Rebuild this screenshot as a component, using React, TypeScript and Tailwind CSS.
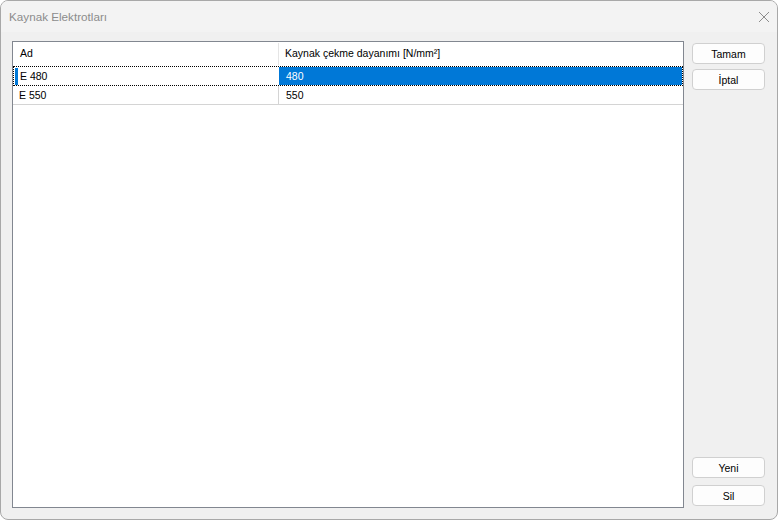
import React from "react";

const rows = [
  { name: "E 480", value: "480" },
  { name: "E 550", value: "550" },
];

function DialogButton({ label }: { label: string }) {
  return (
    <button
      type="button"
      className="h-[21px] w-[73px] rounded-[4px] border border-[#d0d0d0] bg-[#fdfdfd] pt-[1px] text-[10.5px] leading-none text-black"
    >
      {label}
    </button>
  );
}

export default function App() {
  return (
    <div
      className="flex h-[520px] w-[778px] flex-col overflow-hidden rounded-[8px] border border-[#a8a8a8] bg-[#f0f0f0] text-[10.5px] text-black"
      style={{ fontFamily: '"Segoe UI", "Liberation Sans", Arial, sans-serif' }}
    >
      {/* title bar */}
      <div className="flex h-[31px] shrink-0 items-center justify-between bg-[#f3f3f3] pl-[8px] pr-[6px]">
        <span className="text-[11.7px] text-[#8c8c8c]">Kaynak Elektrotları</span>
        <svg width="12" height="12" viewBox="0 0 12 12" className="mr-[1px]">
          <path d="M1 1 L11 11 M11 1 L1 11" stroke="#8c8c8c" strokeWidth="1" />
        </svg>
      </div>

      <div className="flex flex-1 gap-[8px] pb-[11px] pl-[11px] pr-[12px] pt-[9px]">
        {/* list view */}
        <div className="flex w-[672px] flex-col border border-[#828790] bg-white">
          <div className="flex h-[23px] items-center pt-[1px]">
            <div className="flex h-full w-[266px] items-center border-r border-[#e5e5e5] pl-[7px]">Ad</div>
            <div className="pl-[6px]">Kaynak çekme dayanımı [N/mm²]</div>
          </div>
          <div className="mt-[1px] flex flex-col">
            {rows.map((r, i) => {
              const selected = i === 0;
              return (
                <div
                  key={r.name}
                  className={
                    selected
                      ? "flex h-[20px] items-center border border-dotted border-black"
                      : "flex h-[19px] items-center border-b border-[#d4d4d4]"
                  }
                >
                  <div
                    className={
                      selected
                        ? "flex h-full w-[265px] items-center pl-[1px]"
                        : "flex h-full w-[266px] items-center border-r border-[#d4d4d4] pl-[6px] pt-[1px]"
                    }
                  >
                    {selected && <span className="mr-[2px] h-[17px] w-[3px] bg-[#0078d7]" />}
                    <span className={selected ? "pt-[1px]" : ""}>{r.name}</span>
                  </div>
                  <div
                    className={
                      selected
                        ? "flex h-full flex-1 items-center bg-[#0078d7] pl-[7px] pt-[1px] text-white"
                        : "flex h-full flex-1 items-center pl-[7px] pt-[1px]"
                    }
                  >
                    {r.value}
                  </div>
                </div>
              );
            })}
          </div>
        </div>

        {/* buttons */}
        <div className="flex flex-col justify-between pb-[2px] pt-[2px]">
          <div className="flex flex-col gap-[5px]">
            <DialogButton label="Tamam" />
            <DialogButton label="İptal" />
          </div>
          <div className="flex flex-col gap-[7px]">
            <DialogButton label="Yeni" />
            <DialogButton label="Sil" />
          </div>
        </div>
      </div>
    </div>
  );
}
